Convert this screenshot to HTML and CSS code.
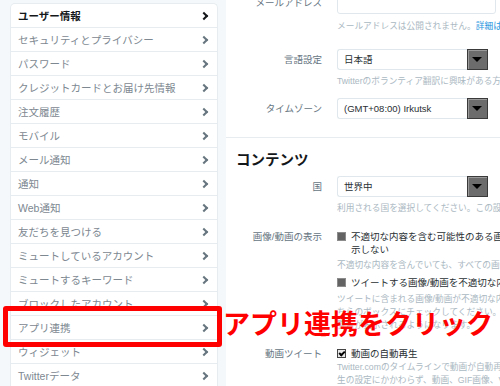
FILE: index.html
```html
<!DOCTYPE html>
<html lang="ja">
<head>
    <meta charset="UTF-8">
    <title>設定 - アプリ連携</title>
    <link rel="stylesheet" href="styles.css">
</head>
<body>
<div class="page">
    <div class="side">
        <ul class="menu">
            <li class="cur"><span>ユーザー情報</span><i class="arr"></i></li>
            <li><span>セキュリティとプライバシー</span><i class="arr"></i></li>
            <li><span>パスワード</span><i class="arr"></i></li>
            <li><span>クレジットカードとお届け先情報</span><i class="arr"></i></li>
            <li><span>注文履歴</span><i class="arr"></i></li>
            <li><span>モバイル</span><i class="arr"></i></li>
            <li><span>メール通知</span><i class="arr"></i></li>
            <li><span>通知</span><i class="arr"></i></li>
            <li><span>Web通知</span><i class="arr"></i></li>
            <li><span>友だちを見つける</span><i class="arr"></i></li>
            <li><span>ミュートしているアカウント</span><i class="arr"></i></li>
            <li><span>ミュートするキーワード</span><i class="arr"></i></li>
            <li><span>ブロックしたアカウント</span><i class="arr"></i></li>
            <li><span>アプリ連携</span><i class="arr"></i></li>
            <li><span>ウィジェット</span><i class="arr"></i></li>
            <li><span>Twitterデータ</span><i class="arr"></i></li>
        </ul>
    </div>

    <div class="main">
        <div class="row first">
            <div class="lab tall">メールアドレス</div>
            <div class="ctl">
                <div class="input"></div>
                <p class="help">メールアドレスは公開されません。<a href="javascript:;">詳細はこちら</a></p>
            </div>
        </div>
        <div class="row mt16">
            <div class="lab">言語設定</div>
            <div class="ctl">
                <div class="sel"><span class="val">日本語</span><span class="btn"></span></div>
                <p class="help">Twitterのボランティア翻訳に興味がある方は、翻訳センターへ</p>
            </div>
        </div>
        <div class="row mt10">
            <div class="lab">タイムゾーン</div>
            <div class="ctl">
                <div class="sel"><span class="val">(GMT+08:00) Irkutsk</span><span class="btn"></span></div>
            </div>
        </div>

        <div class="line"></div>
        <h2 class="title">コンテンツ</h2>

        <div class="row mt6">
            <div class="lab">国</div>
            <div class="ctl">
                <div class="sel"><span class="val">世界中</span><span class="btn"></span></div>
                <p class="help">利用される国を選択してください。この設定は</p>
            </div>
        </div>
        <div class="row mt15">
            <div class="lab small">画像/動画の表示</div>
            <div class="ctl">
                <div class="chk"><i class="box"></i><span>不適切な内容を含む可能性のある画像/動画を表<br>示しない</span></div>
                <p class="help mt3">不適切な内容を含んでいても、すべての画像/動画を表示します</p>
                <div class="chk mt4"><i class="box"></i><span>ツイートする画像/動画を不適切な内容として設定する</span></div>
                <p class="help mt4">ツイートに含まれる画像/動画が不適切な内容を含む場合はこ<br>ちらのボックスにチェックしてください。閲覧者に<br>警告が表示されるようになります。</p>
            </div>
        </div>
        <div class="row mt15">
            <div class="lab small">動画ツイート</div>
            <div class="ctl">
                <div class="chk"><i class="box on"></i><span>動画の自動再生</span></div>
                <p class="help mt1">Twitter.comのタイムラインで動画が自動再生されます。再<br>生の設定にかかわらず、動画、GIF画像、Vineは</p>
            </div>
        </div>
    </div>
</div>

<!--红框和提示文字-->
<div class="mark"></div>
<p class="note">アプリ連携をクリック</p>
</body>
</html>
```

FILE: styles.css
```css
body, div, ul, li, p, h2 {
    margin: 0;
    padding: 0;
}

ul, li {
    list-style: none;
}

body {
    overflow: hidden;
    font-family: "Liberation Sans", "Noto Sans CJK JP", sans-serif;
    color: #14171a;
    background: #fff;
}

a {
    color: #1b95e0;
    text-decoration: none;
}

.page {
    display: flex;
    height: 386px;
}

/*左侧菜单*/
.side {
    flex: none;
    width: 226px;
    padding: 3px 8px 0 10px;
    box-sizing: border-box;
    background: #f5f8fa;
}

.menu {
    width: 208px;
    background: #fff;
    border: 1px solid #e6ecf0;
    border-bottom: none;
    border-radius: 5px 5px 0 0;
    box-sizing: border-box;
}

.menu li {
    display: flex;
    align-items: center;
    justify-content: space-between;
    height: 23px;
    padding: 0 10px 0 7px;
    border-bottom: 1px solid #e6ecf0;
    font-size: 10.5px;
    color: #7d8891;
}

.menu li.cur {
    font-weight: bold;
    color: #14171a;
}

.menu .arr {
    width: 4px;
    height: 4px;
    border-top: 2px solid #66757f;
    border-right: 2px solid #66757f;
    transform: rotate(45deg);
}

.menu li.cur .arr {
    border-color: #14171a;
}

/*右侧设置*/
.main {
    flex: none;
    width: 330px;
}

.row {
    display: grid;
    grid-template-columns: 96px 207px;
    column-gap: 15px;
}

.row.first {
    margin-top: -8px;
}

.lab {
    text-align: right;
    font-size: 9.5px;
    line-height: 21px;
    color: #66757f;
}

.lab.tall {
    line-height: 22px;
}

.lab.small {
    line-height: 13px;
}

.input {
    width: 159px;
    height: 22px;
    border: 1px solid #e1e8ed;
    border-radius: 3px;
    box-sizing: border-box;
}

.help {
    margin-top: 6px;
    font-size: 8.7px;
    line-height: 13px;
    color: #aab8c2;
    white-space: nowrap;
}

.row .ctl .sel + .help {
    margin-top: 5px;
}

.sel {
    display: flex;
    width: 151px;
    height: 21px;
}

.sel .val {
    flex: 1;
    padding-left: 6px;
    border: 1px solid #e1e8ed;
    border-right: none;
    border-radius: 3px 0 0 3px;
    font-size: 9.5px;
    line-height: 19px;
    color: #292f33;
}

.sel .btn {
    position: relative;
    width: 21px;
    background: #6c6c6c;
    border: 1px solid #3a3a3a;
    box-shadow: inset 1px 1px 0 #9a9a9a;
    box-sizing: border-box;
}

.sel .btn:after {
    content: "";
    position: absolute;
    left: 4px;
    top: 7px;
    border-left: 5px solid transparent;
    border-right: 5px solid transparent;
    border-top: 5px solid #000;
}

.line {
    margin-top: 18px;
    border-top: 1px solid #e6ecf0;
}

.title {
    margin: 12px 0 0 10px;
    font-size: 14.5px;
    line-height: 20px;
    font-weight: bold;
    color: #14171a;
}

.chk {
    display: flex;
    gap: 5px;
    font-size: 9.5px;
    line-height: 13px;
    color: #292f33;
    white-space: nowrap;
}

.chk .box {
    flex: none;
    width: 9px;
    height: 9px;
    margin-top: 2px;
    background: #636363;
    border: 1px solid #8c8c8c;
    box-sizing: border-box;
}

.chk .box.on {
    position: relative;
    background: #e8e8e8;
    border-color: #444;
}

.chk .box.on:after {
    content: "";
    position: absolute;
    left: 2px;
    top: 0;
    width: 2px;
    height: 4px;
    border-right: 2px solid #000;
    border-bottom: 2px solid #000;
    transform: rotate(45deg);
}

.mt1 { margin-top: 1px; }
.mt3 { margin-top: 3px; }
.mt4 { margin-top: 4px; }
.mt6 { margin-top: 6px; }
.mt10 { margin-top: 10px; }
.mt15 { margin-top: 15px; }
.mt16 { margin-top: 16px; }

.help.mt1 { margin-top: 1px; }
.help.mt3 { margin-top: 3px; }
.help.mt4 { margin-top: 4px; }

/*标注*/
.mark {
    position: absolute;
    left: 3px;
    top: 306px;
    width: 209px;
    height: 31px;
    border: 5px solid #f00;
    border-radius: 3px;
}

.note {
    position: absolute;
    left: 223px;
    top: 309px;
    font-family: "Noto Sans CJK JP", sans-serif;
    font-size: 27px;
    line-height: 27px;
    font-weight: bold;
    color: #f00;
    white-space: nowrap;
}
```
